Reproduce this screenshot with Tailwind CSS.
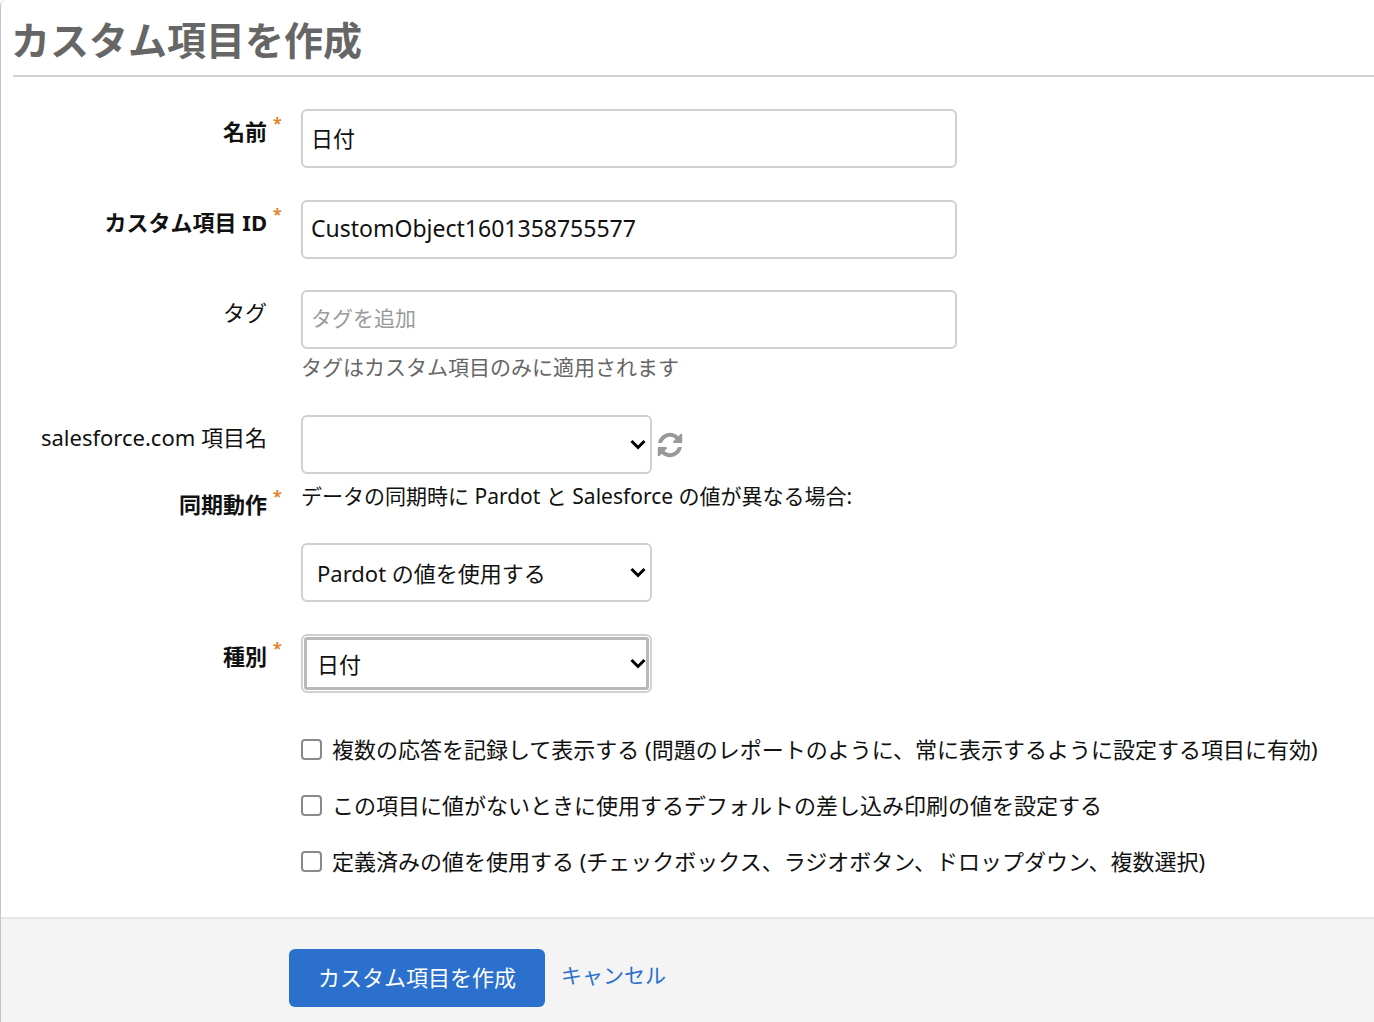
<!DOCTYPE html>
<html lang="ja">
<head>
  <meta charset="UTF-8" />
  <meta name="viewport" content="width=device-width, initial-scale=1.0"/>
  <title>カスタム項目を作成</title>
  <script src="https://cdn.jsdelivr.net/npm/@tailwindcss/browser@4"></script>
</head>
<body class="bg-white font-['Noto_Sans','Noto_Sans_CJK_JP',sans-serif] text-[22px] leading-8 text-[#111]">
  <form class="min-h-screen flex flex-col border-l border-[#c4c4c4] rounded-tl-md">
    <h1 class="ml-[10px] pt-3 text-[39px] leading-14 font-bold text-[#666]">カスタム項目を作成</h1>
    <hr class="ml-3 mt-[7px] border-t-2 border-[#d2d2d2]" />

    <div class="pt-8 pb-7 grid grid-cols-[300px_1fr] items-start">
      <!-- Name -->
      <label for="name" class="pt-[6px] pr-5 flex justify-end gap-[6px] font-bold">名前<span class="w-2 text-base leading-4 text-[#e0852b]">*</span></label>
      <div class="pb-8">
        <input id="name" type="text" value="日付" class="block w-[656px] max-w-full h-[59px] px-2 pb-1 border-2 border-[#d0d0d0] rounded-md" />
      </div>

      <!-- Field ID -->
      <label for="fieldId" class="pt-[6px] pr-5 flex justify-end gap-[6px] font-bold">カスタム項目 ID<span class="w-2 text-base leading-4 text-[#e0852b]">*</span></label>
      <div class="pb-[31px]">
        <input id="fieldId" type="text" value="CustomObject1601358755577" class="block w-[656px] max-w-full h-[59px] px-2 pb-1 border-2 border-[#d0d0d0] rounded-md text-[23px]" />
      </div>

      <!-- Tags -->
      <label for="tags" class="pt-[6px] pr-[34px] text-right">タグ</label>
      <div class="pb-8">
        <input id="tags" type="text" placeholder="タグを追加" class="block w-[656px] max-w-full h-[59px] px-2 pb-1 border-2 border-[#d0d0d0] rounded-md text-[21px] placeholder:text-[#9a9a9a]" />
        <p class="pt-[2px] text-[21px] text-[#666]">タグはカスタム項目のみに適用されます</p>
      </div>

      <!-- salesforce.com field -->
      <label for="sfField" class="pt-[6px] pr-[34px] text-right">salesforce.com 項目名</label>
      <div class="flex items-center">
        <div class="relative w-[351px]">
          <select id="sfField" class="block w-full h-[59px] px-[14px] appearance-none border-2 border-[#d0d0d0] rounded-md">
            <option value=""></option>
          </select>
          <svg class="absolute right-[6px] top-6 w-4 h-3 pointer-events-none" viewBox="0 0 16 12" fill="none" stroke="#000" stroke-width="3"><path d="M1.500 2 8 8.500 14.500 2"/></svg>
        </div>
        <button type="button" aria-label="更新" class="ml-[5px] text-[#999]">
          <svg class="w-[26px] h-[26px]" viewBox="-50 -50 1636 1636" fill="currentColor"><path d="M1511 928q0 5-1 7-64 268-268 434.500T764 1536q-146 0-282.500-55T238 1324l-129 129q-19 19-45 19t-45-19-19-45V960q0-26 19-45t45-19h448q26 0 45 19t19 45-19 45l-137 137q71 66 161 102t187 36q134 0 250-65t186-179q11-17 53-117 8-23 30-23h192q13 0 22.500 9.500t9.500 22.500zm25-800v448q0 26-19 45t-45 19h-448q-26 0-45-19t-19-45 19-45l138-138Q969 256 768 256q-134 0-250 65T332 500q-11 17-53 117-8 23-30 23H50q-13 0-22.500-9.500T18 608v-7q65-268 270-434.500T768 0q146 0 284 55.500T1297 212l130-129q19-19 45-19t45 19 19 45z"/></svg>
        </button>
      </div>

      <!-- Sync behavior -->
      <label for="sync" class="pt-[14px] pr-5 flex justify-end gap-[6px] font-bold">同期動作<span class="w-2 text-base leading-4 text-[#e0852b]">*</span></label>
      <div class="pt-[6px] pb-8">
        <p class="pb-[31px] text-[21px]">データの同期時に Pardot と Salesforce の値が異なる場合:</p>
        <div class="relative w-[351px]">
          <select id="sync" class="block w-full h-[59px] px-[14px] appearance-none border-2 border-[#d0d0d0] rounded-md">
            <option>Pardot の値を使用する</option>
          </select>
          <svg class="absolute right-[6px] top-6 w-4 h-3 pointer-events-none" viewBox="0 0 16 12" fill="none" stroke="#000" stroke-width="3"><path d="M1.500 2 8 8.500 14.500 2"/></svg>
        </div>
      </div>

      <!-- Type -->
      <label for="type" class="pt-[6px] pr-5 flex justify-end gap-[6px] font-bold">種別<span class="w-2 text-base leading-4 text-[#e0852b]">*</span></label>
      <div class="pb-7">
        <div class="relative w-[351px]">
          <select id="type" class="block w-full h-[59px] px-[14px] appearance-none border-2 border-[#d0d0d0] rounded-md outline-3 -outline-offset-6 outline-[#b9b9bd]">
            <option>日付</option>
          </select>
          <svg class="absolute right-[6px] top-6 w-4 h-3 pointer-events-none" viewBox="0 0 16 12" fill="none" stroke="#000" stroke-width="3"><path d="M1.500 2 8 8.500 14.500 2"/></svg>
        </div>
      </div>

      <!-- Options -->
      <div class="col-start-2">
        <label class="h-14 flex items-center gap-[10px]"><input type="checkbox" class="size-[21px] shrink-0 appearance-none border-2 border-[#8a8a8a] rounded-sm checked:bg-[#2b70cc]" />複数の応答を記録して表示する (問題のレポートのように、常に表示するように設定する項目に有効)</label>
        <label class="h-14 flex items-center gap-[10px]"><input type="checkbox" class="size-[21px] shrink-0 appearance-none border-2 border-[#8a8a8a] rounded-sm checked:bg-[#2b70cc]" />この項目に値がないときに使用するデフォルトの差し込み印刷の値を設定する</label>
        <label class="h-14 flex items-center gap-[10px]"><input type="checkbox" class="size-[21px] shrink-0 appearance-none border-2 border-[#8a8a8a] rounded-sm checked:bg-[#2b70cc]" />定義済みの値を使用する (チェックボックス、ラジオボタン、ドロップダウン、複数選択)</label>
      </div>
    </div>

    <div class="grow pt-[30px] pb-3 pl-72 flex items-start gap-4 border-t-2 border-[#e6e6e6] bg-[#f4f4f4]">
      <button type="submit" class="h-[58px] w-64 pb-[2px] rounded-md bg-[#2b70cc] text-white">カスタム項目を作成</button>
      <a href="#" class="pt-[10px] text-[21px] text-[#2b70cc]">キャンセル</a>
    </div>
  </form>
</body>
</html>
